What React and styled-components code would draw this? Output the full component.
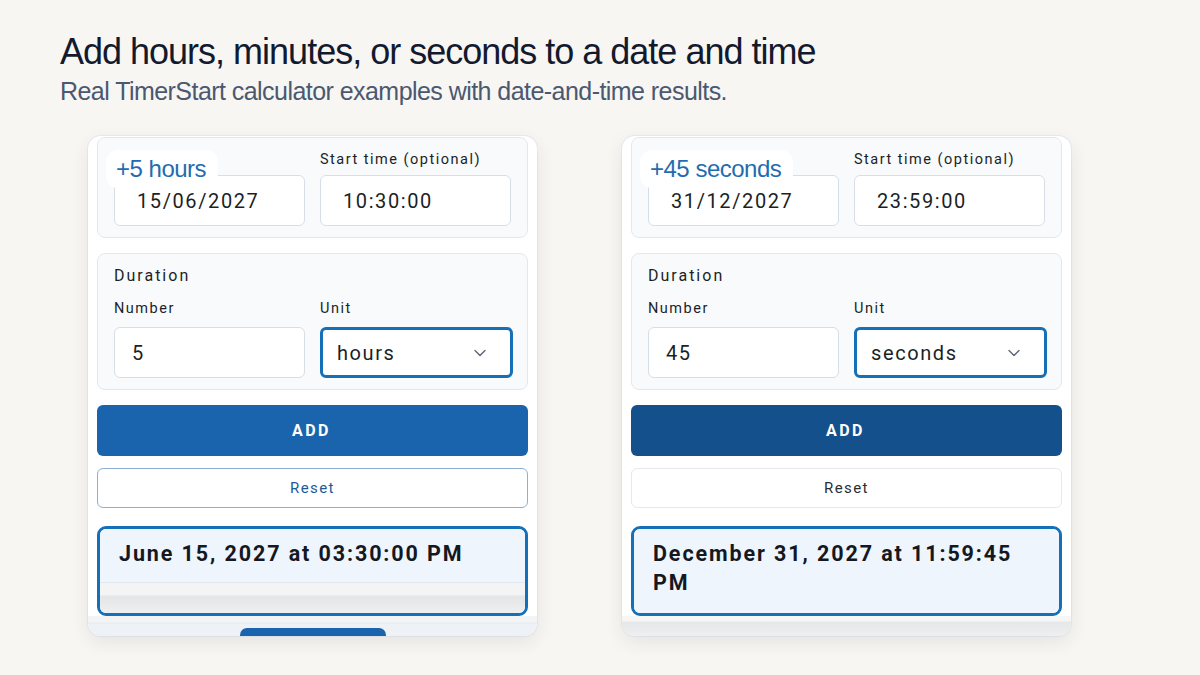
import React from 'react';
import styled, { createGlobalStyle } from 'styled-components';
import { ChevronDown } from 'lucide-react';

const GlobalStyle = createGlobalStyle`
  body {
    margin: 0;
    background: #f7f6f3;
    font-family: "Liberation Sans", Arial, sans-serif;
  }
`;

const Page = styled.div`
  width: 1200px;
  height: 675px;
  box-sizing: border-box;
  padding: 32px 60px 0;
  overflow: hidden;
`;

const Title = styled.h1`
  margin: 0;
  font-family: "Liberation Sans", Arial, sans-serif;
  font-weight: 400;
  font-size: 36px;
  line-height: 40px;
  color: #131a2e;
  letter-spacing: -1px;
`;

const Subtitle = styled.p`
  margin: 4px 0 0;
  font-size: 25px;
  line-height: 30px;
  color: #4b5870;
  letter-spacing: -0.55px;
`;

const CardRow = styled.div`
  display: flex;
  gap: 85px;
  margin: 30px 0 0 28px;
`;

const Card = styled.div`
  position: relative;
  width: 449px;
  height: 500px;
  box-sizing: border-box;
  padding: 1px 9px 0;
  background: #fff;
  border-radius: 13px;
  box-shadow: 0 6px 18px rgba(40, 40, 30, 0.09), 0 0 0 1px rgba(226, 232, 240, 0.7);
  overflow: hidden;
  display: flex;
  flex-direction: column;
  font-family: Roboto, "Liberation Sans", sans-serif;
  color: #1c1f26;

  & > * {
    flex-shrink: 0;
  }
`;

const Section = styled.div`
  background: #f8fafc;
  border: 1px solid #e3e8ef;
  border-radius: 8px;
  padding: 13px 16px 11px;
  margin-bottom: ${p => p.$gap || 0}px;
`;

const Legend = styled.div`
  font-size: 16px;
  line-height: 18px;
  margin-bottom: 15px;
  letter-spacing: 2px;
`;

const FieldGrid = styled.div`
  display: grid;
  grid-template-columns: 1fr 1fr;
  column-gap: 15px;
`;

const Field = styled.div`
  display: flex;
  flex-direction: column;
`;

const Label = styled.label`
  min-height: 17px;
  font-size: 14.5px;
  line-height: 17px;
  margin-bottom: ${p => p.$gap || 7}px;
  letter-spacing: 1.5px;
`;

const InputBox = styled.div`
  height: 51px;
  box-sizing: border-box;
  display: flex;
  align-items: center;
  justify-content: space-between;
  padding: 0 ${p => (p.$select ? 20 : 22)}px 0 ${p => p.$pl || 22}px;
  background: #fff;
  border: ${p => (p.$select ? '3px solid #1570b8' : '1px solid #d8dee7')};
  border-radius: 6px;
  margin: ${p => (p.$select ? '0 -2px 0 0' : '0')};
  font-size: 20px;
  letter-spacing: 1.6px;
  color: #1c1f26;

  svg {
    color: #5b6473;
  }
`;

const Badge = styled.div`
  position: absolute;
  top: 14px;
  left: 18px;
  padding: 3px 12px 4px 10px;
  background: rgba(255, 255, 255, 0.96);
  border-radius: 12px;
  font-family: "Liberation Sans", Arial, sans-serif;
  font-size: 24px;
  line-height: 31px;
  color: #1f6db0;
  letter-spacing: -0.5px;
`;

const AddButton = styled.button`
  height: 51px;
  margin-top: 15px;
  border: none;
  border-radius: 6px;
  background: ${p => p.$bg};
  color: #fff;
  font-family: inherit;
  font-size: 16px;
  font-weight: 700;
  letter-spacing: 2.5px;
  padding-left: 4px;
`;

const ResetButton = styled.button`
  height: 40px;
  margin-top: 12px;
  background: #fff;
  border: 1px solid ${p => p.$border};
  border-radius: 6px;
  color: ${p => p.$color};
  font-family: inherit;
  font-size: 15px;
  letter-spacing: 1.4px;
`;

const ResultFrame = styled.div`
  height: 90px;
  margin-top: 18px;
  box-sizing: border-box;
  border: 3px solid #1570b8;
  border-radius: 9px;
  overflow: hidden;
  display: flex;
  flex-direction: column;
`;

const ResultBody = styled.div`
  flex: ${p => (p.$clipped ? '0 0 54px' : '1')};
  box-sizing: border-box;
  background: #eef5fd;
  border-bottom: ${p => (p.$clipped ? '1px solid #e1e8f1' : 'none')};
  padding: 10px 18px 0 19px;
  font-size: 21.5px;
  line-height: 29px;
  font-weight: 700;
  letter-spacing: 1.9px;
  color: #15181f;
`;

const ResultFade = styled.div`
  flex: 1;
  background: linear-gradient(#f4f4f5 0, #f4f4f5 12px, #e4e5e7 13px, #eeeff1 100%);
`;

const Footer = styled.div`
  flex: 1 1 auto;
  min-height: 0;
  overflow: hidden;
  margin: 0 -9px;
  display: flex;
  justify-content: center;
  align-items: flex-start;
  background: ${p =>
    p.$plain
      ? 'linear-gradient(#f6f6f7 0, #f6f6f7 5px, #e6e7e9 6px, #eeeff1 100%)'
      : 'linear-gradient(#f3f4f5 0, #f3f4f5 6px, #e6e9ee 7px, #eef2f7 8px)'};
  padding-top: 12px;
`;

const FooterButton = styled.div`
  width: 146px;
  height: 20px;
  flex-shrink: 0;
  background: #1a64ad;
  border-radius: 7px 7px 0 0;
`;

const examples = [
  {
    badge: '+5 hours',
    date: '15/06/2027',
    time: '10:30:00',
    number: '5',
    unit: 'hours',
    result: 'June 15, 2027 at 03:30:00 PM',
    addBg: '#1a64ad',
    resetBorder: '#8eb0d2',
    resetColor: '#1d5a96',
    clipped: true,
  },
  {
    badge: '+45 seconds',
    date: '31/12/2027',
    time: '23:59:00',
    number: '45',
    unit: 'seconds',
    result: 'December 31, 2027 at 11:59:45 PM',
    addBg: '#14508b',
    resetBorder: '#e5e8ee',
    resetColor: '#2a2d33',
    clipped: false,
  },
];

// the date label sits under the badge, so only its space is kept
const ExampleCard = ({ ex }) => (
  <Card>
    <Section $gap={15}>
      <FieldGrid>
        <Field>
          <Label aria-label="Start date" />
          <InputBox>{ex.date}</InputBox>
        </Field>
        <Field>
          <Label>Start time (optional)</Label>
          <InputBox>{ex.time}</InputBox>
        </Field>
      </FieldGrid>
    </Section>
    <Section>
      <Legend>Duration</Legend>
      <FieldGrid>
        <Field>
          <Label $gap={10}>Number</Label>
          <InputBox $pl={17}>{ex.number}</InputBox>
        </Field>
        <Field>
          <Label $gap={10}>Unit</Label>
          <InputBox $select $pl={14}>
            {ex.unit}
            <ChevronDown size={20} strokeWidth={1.6} />
          </InputBox>
        </Field>
      </FieldGrid>
    </Section>
    <AddButton $bg={ex.addBg}>ADD</AddButton>
    <ResetButton $border={ex.resetBorder} $color={ex.resetColor}>Reset</ResetButton>
    <ResultFrame>
      <ResultBody $clipped={ex.clipped}>{ex.result}</ResultBody>
      {ex.clipped && <ResultFade />}
    </ResultFrame>
    <Footer $plain={!ex.clipped}>{ex.clipped && <FooterButton />}</Footer>
    <Badge>{ex.badge}</Badge>
  </Card>
);

export default function App() {
  return (
    <Page>
      <GlobalStyle />
      <Title>Add hours, minutes, or seconds to a date and time</Title>
      <Subtitle>Real TimerStart calculator examples with date-and-time results.</Subtitle>
      <CardRow>
        {examples.map(ex => (
          <ExampleCard key={ex.badge} ex={ex} />
        ))}
      </CardRow>
    </Page>
  );
}
